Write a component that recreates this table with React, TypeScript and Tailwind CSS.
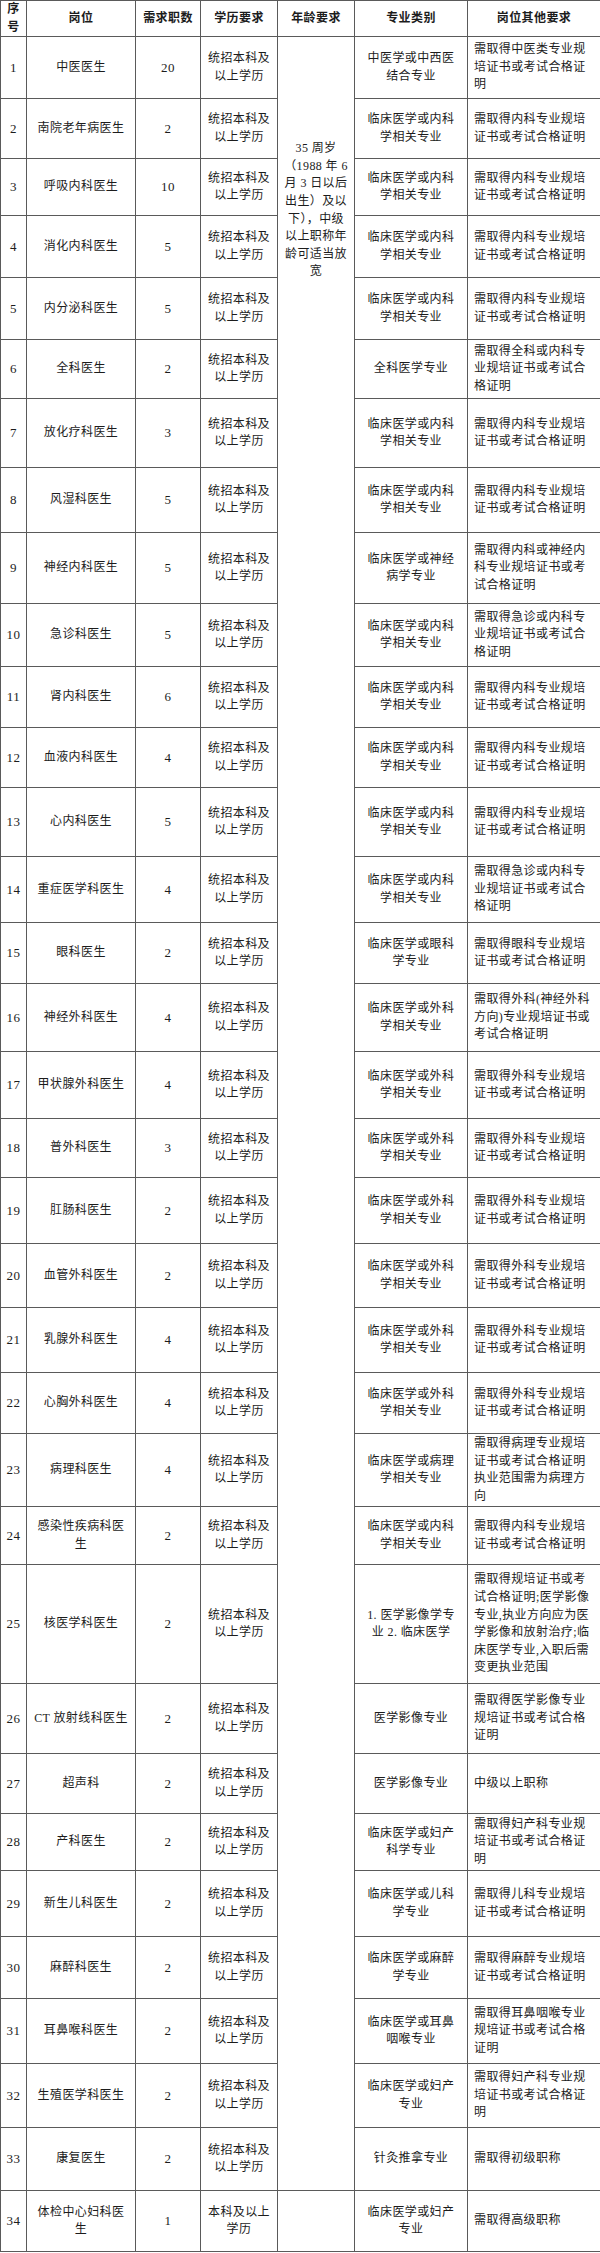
import React from "react";

type Row = {
  no: number;
  post: string[];
  count: string;
  edu: string[];
  major: string[];
  other: string[];
  h: number;
};

const EDU = ["统招本科及", "以上学历"];
const NEIKE = ["临床医学或内科", "学相关专业"];
const WAIKE = ["临床医学或外科", "学相关专业"];
const NEIKE_CERT = ["需取得内科专业规培", "证书或考试合格证明"];
const WAIKE_CERT = ["需取得外科专业规培", "证书或考试合格证明"];
const JIZHEN_CERT = ["需取得急诊或内科专", "业规培证书或考试合", "格证明"];
const FUCHAN_CERT = ["需取得妇产科专业规", "培证书或考试合格证", "明"];

const rows: Row[] = [
  { no: 1, post: ["中医医生"], count: "20", edu: EDU, major: ["中医学或中西医", "结合专业"], other: ["需取得中医类专业规", "培证书或考试合格证", "明"], h: 62 },
  { no: 2, post: ["南院老年病医生"], count: "2", edu: EDU, major: NEIKE, other: NEIKE_CERT, h: 60 },
  { no: 3, post: ["呼吸内科医生"], count: "10", edu: EDU, major: NEIKE, other: NEIKE_CERT, h: 57 },
  { no: 4, post: ["消化内科医生"], count: "5", edu: EDU, major: NEIKE, other: NEIKE_CERT, h: 62 },
  { no: 5, post: ["内分泌科医生"], count: "5", edu: EDU, major: NEIKE, other: NEIKE_CERT, h: 62 },
  { no: 6, post: ["全科医生"], count: "2", edu: EDU, major: ["全科医学专业"], other: ["需取得全科或内科专", "业规培证书或考试合", "格证明"], h: 59 },
  { no: 7, post: ["放化疗科医生"], count: "3", edu: EDU, major: NEIKE, other: NEIKE_CERT, h: 69 },
  { no: 8, post: ["风湿科医生"], count: "5", edu: EDU, major: NEIKE, other: NEIKE_CERT, h: 65 },
  { no: 9, post: ["神经内科医生"], count: "5", edu: EDU, major: ["临床医学或神经", "病学专业"], other: ["需取得内科或神经内", "科专业规培证书或考", "试合格证明"], h: 71 },
  { no: 10, post: ["急诊科医生"], count: "5", edu: EDU, major: NEIKE, other: JIZHEN_CERT, h: 63 },
  { no: 11, post: ["肾内科医生"], count: "6", edu: EDU, major: NEIKE, other: NEIKE_CERT, h: 61 },
  { no: 12, post: ["血液内科医生"], count: "4", edu: EDU, major: NEIKE, other: NEIKE_CERT, h: 60 },
  { no: 13, post: ["心内科医生"], count: "5", edu: EDU, major: NEIKE, other: NEIKE_CERT, h: 69 },
  { no: 14, post: ["重症医学科医生"], count: "4", edu: EDU, major: NEIKE, other: JIZHEN_CERT, h: 66 },
  { no: 15, post: ["眼科医生"], count: "2", edu: EDU, major: ["临床医学或眼科", "学专业"], other: ["需取得眼科专业规培", "证书或考试合格证明"], h: 61 },
  { no: 16, post: ["神经外科医生"], count: "4", edu: EDU, major: WAIKE, other: ["需取得外科(神经外科", "方向)专业规培证书或", "考试合格证明"], h: 68 },
  { no: 17, post: ["甲状腺外科医生"], count: "4", edu: EDU, major: WAIKE, other: WAIKE_CERT, h: 67 },
  { no: 18, post: ["普外科医生"], count: "3", edu: EDU, major: WAIKE, other: WAIKE_CERT, h: 59 },
  { no: 19, post: ["肛肠科医生"], count: "2", edu: EDU, major: WAIKE, other: WAIKE_CERT, h: 66 },
  { no: 20, post: ["血管外科医生"], count: "2", edu: EDU, major: WAIKE, other: WAIKE_CERT, h: 64 },
  { no: 21, post: ["乳腺外科医生"], count: "4", edu: EDU, major: WAIKE, other: WAIKE_CERT, h: 65 },
  { no: 22, post: ["心胸外科医生"], count: "4", edu: EDU, major: WAIKE, other: WAIKE_CERT, h: 61 },
  { no: 23, post: ["病理科医生"], count: "4", edu: EDU, major: ["临床医学或病理", "学相关专业"], other: ["需取得病理专业规培", "证书或考试合格证明", "执业范围需为病理方", "向"], h: 73 },
  { no: 24, post: ["感染性疾病科医", "生"], count: "2", edu: EDU, major: NEIKE, other: NEIKE_CERT, h: 58 },
  { no: 25, post: ["核医学科医生"], count: "2", edu: EDU, major: ["1. 医学影像学专", "业 2. 临床医学"], other: ["需取得规培证书或考", "试合格证明;医学影像", "专业,执业方向应为医", "学影像和放射治疗;临", "床医学专业,入职后需", "变更执业范围"], h: 119 },
  { no: 26, post: ["CT 放射线科医生"], count: "2", edu: EDU, major: ["医学影像专业"], other: ["需取得医学影像专业", "规培证书或考试合格", "证明"], h: 70 },
  { no: 27, post: ["超声科"], count: "2", edu: EDU, major: ["医学影像专业"], other: ["中级以上职称"], h: 60 },
  { no: 28, post: ["产科医生"], count: "2", edu: EDU, major: ["临床医学或妇产", "科学专业"], other: FUCHAN_CERT, h: 57 },
  { no: 29, post: ["新生儿科医生"], count: "2", edu: EDU, major: ["临床医学或儿科", "学专业"], other: ["需取得儿科专业规培", "证书或考试合格证明"], h: 66 },
  { no: 30, post: ["麻醉科医生"], count: "2", edu: EDU, major: ["临床医学或麻醉", "学专业"], other: ["需取得麻醉专业规培", "证书或考试合格证明"], h: 62 },
  { no: 31, post: ["耳鼻喉科医生"], count: "2", edu: EDU, major: ["临床医学或耳鼻", "咽喉专业"], other: ["需取得耳鼻咽喉专业", "规培证书或考试合格", "证明"], h: 65 },
  { no: 32, post: ["生殖医学科医生"], count: "2", edu: EDU, major: ["临床医学或妇产", "专业"], other: FUCHAN_CERT, h: 64 },
  { no: 33, post: ["康复医生"], count: "2", edu: EDU, major: ["针灸推拿专业"], other: ["需取得初级职称"], h: 63 },
  { no: 34, post: ["体检中心妇科医", "生"], count: "1", edu: ["本科及以上", "学历"], major: ["临床医学或妇产", "专业"], other: ["需取得高级职称"], h: 61 },
];

const AGE = ["35 周岁", "（1988 年 6", "月 3 日以后", "出生）及以", "下），中级", "以上职称年", "龄可适当放", "宽"];

function Lines({ lines }: { lines: string[] }) {
  return (
    <>
      {lines.map((l, i) => (
        <div key={i} className="whitespace-nowrap">
          {l}
        </div>
      ))}
    </>
  );
}

const td = "border border-[#5a5a5a] p-0 align-middle";

export default function App() {
  return (
    <div
      className="w-[600px] bg-white text-[#1c1c1c] text-[12px] leading-[17.6px] tracking-[0.4px]"
      style={{ fontFamily: '"Liberation Serif", "Noto Sans CJK SC", serif' }}
    >
      <table className="w-[600px] table-fixed border-collapse">
        <colgroup>
          <col className="w-[26px]" />
          <col className="w-[109px]" />
          <col className="w-[65px]" />
          <col className="w-[77px]" />
          <col className="w-[77px]" />
          <col className="w-[113px]" />
          <col className="w-[133px]" />
        </colgroup>
        <thead>
          <tr className="h-[36px] font-bold text-center">
            <th className={td}>
              <div>序</div>
              <div>号</div>
            </th>
            <th className={td}>岗位</th>
            <th className={td}>需求职数</th>
            <th className={td}>学历要求</th>
            <th className={td}>年龄要求</th>
            <th className={td}>专业类别</th>
            <th className={td}>岗位其他要求</th>
          </tr>
        </thead>
        <tbody>
          {rows.map((r) => (
            <tr key={r.no} style={{ height: r.h }}>
              <td className={`${td} text-center text-[13px]`}>{r.no}</td>
              <td className={`${td} text-center`}>
                <Lines lines={r.post} />
              </td>
              <td className={`${td} text-center text-[13px]`}>{r.count}</td>
              <td className={`${td} text-center`}>
                <Lines lines={r.edu} />
              </td>
              {r.no === 1 && (
                <td rowSpan={33} className={`${td} !align-top text-center pt-[103px]`}>
                  <Lines lines={AGE} />
                </td>
              )}
              {r.no === 34 && <td className={td} />}
              <td className={`${td} text-center`}>
                <Lines lines={r.major} />
              </td>
              <td className={`${td} text-left pl-[6px]`}>
                <Lines lines={r.other} />
              </td>
            </tr>
          ))}
        </tbody>
      </table>
    </div>
  );
}
